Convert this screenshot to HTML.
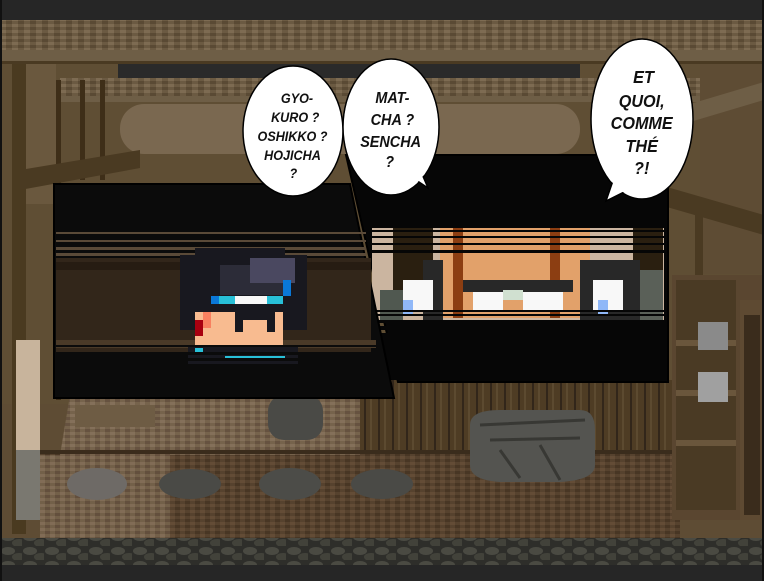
<!DOCTYPE html>
<html><head><meta charset="utf-8"><style>
html,body{margin:0;padding:0;background:#111;}
svg{display:block}
text{font-family:"Liberation Sans",sans-serif;font-weight:bold;font-style:italic;fill:#111;text-anchor:middle}
</style></head><body>
<svg width="764" height="581" viewBox="0 0 764 581" xmlns="http://www.w3.org/2000/svg">
<defs>
<pattern id="tex" width="12" height="6" patternUnits="userSpaceOnUse">
<rect width="12" height="6" fill="#6b5a42"/><rect x="0" y="0" width="6" height="3" fill="#7d6b52"/><rect x="6" y="3" width="6" height="3" fill="#5a4a34"/>
</pattern>
<pattern id="floor" width="10" height="6" patternUnits="userSpaceOnUse">
<rect width="10" height="6" fill="#56422e"/><rect x="0" y="0" width="5" height="3" fill="#634c36"/><rect x="5" y="3" width="5" height="3" fill="#483624"/>
</pattern>
<pattern id="mat" width="10" height="6" patternUnits="userSpaceOnUse">
<rect width="10" height="6" fill="#76634c"/><rect x="0" y="0" width="5" height="3" fill="#84705a"/><rect x="5" y="3" width="5" height="3" fill="#665240"/>
</pattern>
<pattern id="plank" width="14" height="10" patternUnits="userSpaceOnUse">
<rect width="14" height="10" fill="#4e3c24"/><rect x="0" width="2" height="10" fill="#32261a"/><rect x="6" width="2" height="10" fill="#5c4a30"/>
</pattern>
<pattern id="cob" width="22" height="14" patternUnits="userSpaceOnUse">
<rect width="22" height="14" fill="#2e2e2a"/><ellipse cx="8" cy="5" rx="7" ry="4" fill="#4a4a42"/><ellipse cx="19" cy="11" rx="7" ry="4" fill="#42423a"/>
</pattern>
</defs>
<rect width="764" height="581" fill="#5e4c34"/>
<rect x="0" y="0" width="764" height="20" fill="#262626"/>
<rect x="0" y="20" width="764" height="34" fill="url(#tex)"/>
<rect x="0" y="50" width="764" height="13" fill="#6e5e46"/>
<rect x="0" y="61" width="764" height="3" fill="#4a3a22"/>
<rect x="0" y="64" width="764" height="340" fill="#5f4e34"/>
<rect x="118" y="64" width="462" height="14" fill="#2a2a2a"/>
<rect x="60" y="78" width="640" height="22" fill="url(#tex)"/>
<rect x="60" y="96" width="640" height="6" fill="#6e5e46"/>
<rect x="120" y="104" width="460" height="50" rx="24" fill="#7a6850"/>
<rect x="12" y="64" width="14" height="470" fill="#4a3a20"/>
<rect x="26" y="64" width="30" height="140" fill="#6a583e"/>
<rect x="56" y="80" width="5" height="320" fill="#3e2e18"/>
<rect x="80" y="80" width="5" height="100" fill="#3e2e18"/>
<rect x="100" y="80" width="5" height="100" fill="#3e2e18"/>
<polygon points="20,170 140,150 140,168 20,190" fill="#4a3a22"/>
<rect x="16" y="340" width="24" height="180" fill="#c8b49c"/>
<rect x="16" y="450" width="24" height="70" fill="#7a7870"/>
<rect x="700" y="64" width="64" height="210" fill="#5e4c34"/>
<polygon points="670,110 764,82 764,100 670,128" fill="#6e5e46"/>
<polygon points="660,185 764,215 764,235 660,205" fill="#4a3a22"/>
<rect x="695" y="200" width="8" height="80" fill="#4a3a22"/>
<rect x="360" y="380" width="320" height="75" fill="url(#plank)"/>
<rect x="40" y="450" width="640" height="95" fill="url(#floor)"/>
<polygon points="70,395 360,395 360,455 60,455" fill="url(#mat)"/>
<rect x="40" y="455" width="130" height="90" fill="url(#mat)" opacity="0.9"/>
<rect x="75" y="405" width="80" height="22" fill="#6e5c44"/>
<rect x="40" y="450" width="640" height="4" fill="#3a2c1c"/>
<rect x="672" y="275" width="92" height="245" fill="#5a4630"/>
<rect x="676" y="280" width="60" height="230" fill="#4a3a24"/>
<rect x="740" y="300" width="24" height="220" fill="#5e4a32"/>
<rect x="744" y="315" width="16" height="200" fill="#3a2c1c"/>
<rect x="676" y="340" width="60" height="6" fill="#6a563c"/>
<rect x="676" y="390" width="60" height="6" fill="#6a563c"/>
<rect x="676" y="440" width="60" height="6" fill="#6a563c"/>
<rect x="698" y="322" width="30" height="28" fill="#8a8a8a"/>
<rect x="698" y="372" width="30" height="30" fill="#a0a0a0"/>
<ellipse cx="97" cy="484" rx="30" ry="16" fill="#6e6a66"/>
<ellipse cx="190" cy="484" rx="31" ry="15" fill="#4a4a46"/>
<ellipse cx="290" cy="484" rx="31" ry="16" fill="#4c4c48"/>
<ellipse cx="382" cy="484" rx="31" ry="15" fill="#4a4a46"/>
<rect x="268" y="395" width="55" height="45" rx="16" fill="#4a4a46"/>
<path d="M470 425 Q470 410 500 410 L580 410 Q595 410 595 430 L595 465 Q595 480 560 482 L500 482 Q470 480 470 465 Z" fill="#545450"/>
<path d="M480 425 L585 420 M490 440 L580 438 M500 450 L520 478 M540 445 L560 480" stroke="#383834" stroke-width="3" fill="none"/>
<rect x="0" y="538" width="764" height="28" fill="url(#cob)"/>
<rect x="0" y="565" width="764" height="16" fill="#262626"/>
<rect x="0" y="0" width="2" height="581" fill="#111"/>
<rect x="762" y="0" width="2" height="581" fill="#111"/>

<polygon points="346,155 668,155 668,382 398,382" fill="#060606" stroke="#000" stroke-width="2"/>
<g>
<rect x="372" y="228" width="292" height="92" fill="#cbb5a0"/>
<rect x="393" y="228" width="40" height="70" fill="#2a1f10"/>
<rect x="633" y="228" width="30" height="70" fill="#2a1f10"/>
<rect x="440" y="228" width="150" height="90" fill="#e2a16a"/>
<rect x="453" y="228" width="10" height="90" fill="#8c3e12"/>
<rect x="550" y="228" width="10" height="90" fill="#8c3e12"/>
<rect x="423" y="260" width="20" height="60" fill="#282828"/>
<rect x="580" y="260" width="60" height="60" fill="#282828"/>
<rect x="403" y="280" width="30" height="30" fill="#f8f8f8"/>
<rect x="403" y="300" width="10" height="15" fill="#90b8f8"/>
<rect x="593" y="280" width="30" height="30" fill="#f8f8f8"/>
<rect x="598" y="300" width="10" height="15" fill="#90b8f8"/>
<rect x="463" y="280" width="110" height="12" fill="#282828"/>
<rect x="473" y="292" width="30" height="18" fill="#f8f8f8"/>
<rect x="523" y="292" width="40" height="18" fill="#f8f8f8"/>
<rect x="503" y="290" width="20" height="10" fill="#d0e0d0"/>
<rect x="640" y="270" width="23" height="50" fill="#5a6058"/>
<rect x="380" y="290" width="23" height="30" fill="#505850"/>
<g fill="#060606">
<rect x="372" y="230" width="292" height="2"/><rect x="372" y="236" width="292" height="2"/><rect x="372" y="243" width="292" height="2"/><rect x="372" y="250" width="292" height="3"/>
<rect x="372" y="310" width="292" height="2"/><rect x="372" y="314" width="292" height="2"/><rect x="372" y="320" width="292" height="3"/><rect x="372" y="326" width="292" height="4"/><rect x="372" y="333" width="292" height="5"/>
</g>
<rect x="372" y="338" width="292" height="42" fill="#060606"/>
</g>

<polygon points="54,184 350,184 394,398 54,398" fill="#0b0b0b" stroke="#000" stroke-width="2"/>
<g>
<rect x="56" y="232" width="310" height="2" fill="#5a4a38"/>
<rect x="56" y="240" width="310" height="2" fill="#5a4a38"/>
<rect x="56" y="247" width="310" height="3" fill="#5a4a38"/>
<rect x="56" y="253" width="310" height="3" fill="#5a4a38"/>
<rect x="56" y="258" width="315" height="95" fill="#32261a"/>
<rect x="56" y="262" width="315" height="8" fill="#261c12"/>
<rect x="56" y="340" width="320" height="8" fill="#4a3a28"/>
<rect x="180" y="255" width="127" height="75" fill="#18181f"/>
<rect x="195" y="248" width="90" height="10" fill="#18181f"/>
<rect x="220" y="265" width="70" height="30" fill="#2c2c38"/>
<rect x="250" y="258" width="45" height="25" fill="#4a4860"/>
<rect x="283" y="280" width="8" height="16" fill="#0a78d8"/>
<rect x="211" y="296" width="8" height="8" fill="#0a78d8"/>
<rect x="219" y="296" width="16" height="8" fill="#28c0d8"/>
<rect x="235" y="296" width="32" height="8" fill="#f8f8f8"/>
<rect x="267" y="296" width="16" height="8" fill="#28c0d8"/>
<rect x="195" y="312" width="88" height="34" fill="#f8bb90"/>
<rect x="203" y="312" width="8" height="16" fill="#f88060"/>
<rect x="195" y="320" width="8" height="16" fill="#a80010"/>
<rect x="235" y="304" width="8" height="28" fill="#18181f"/>
<rect x="267" y="304" width="8" height="28" fill="#18181f"/>
<rect x="243" y="312" width="24" height="8" fill="#18181f"/>
<rect x="188" y="346" width="110" height="20" fill="#18181f"/>
<rect x="195" y="348" width="8" height="4" fill="#28c0d8"/>
<rect x="225" y="356" width="60" height="3" fill="#28c0d8"/>
<g fill="#0b0b0b">
<rect x="56" y="345" width="320" height="2"/><rect x="56" y="352" width="320" height="3"/><rect x="56" y="358" width="320" height="3"/><rect x="56" y="364" width="320" height="3"/>
</g>
<rect x="56" y="369" width="330" height="28" fill="#0b0b0b"/>
</g>

<!-- bubbles -->
<g stroke="#000" stroke-width="1.5" fill="#fff">
<ellipse cx="293" cy="131" rx="50" ry="65"/>
<ellipse cx="391" cy="127" rx="48" ry="68"/>
<path d="M398 168 L428 188 L416 160 Z"/>
<ellipse cx="642" cy="119" rx="51" ry="80"/>
<path d="M616 172 L606 201 L636 186 Z"/>
</g>
<g fill="#fff">
<ellipse cx="391" cy="127" rx="47" ry="67"/>
<ellipse cx="642" cy="119" rx="50" ry="79"/>
</g>
<g font-size="14" transform="scale(0.9,1)">
<text><tspan x="330" y="103">GYO-</tspan><tspan x="328" y="122">KURO ?</tspan><tspan x="325" y="141">OSHIKKO ?</tspan><tspan x="325" y="160">HOJICHA</tspan><tspan x="326" y="178">?</tspan></text>
</g>
<g transform="scale(0.9,1)">
<text font-size="16"><tspan x="436" y="103">MAT-</tspan><tspan x="436" y="125">CHA ?</tspan><tspan x="434" y="147">SENCHA</tspan><tspan x="433" y="167">?</tspan></text>
<text font-size="18"><tspan x="715" y="83">ET</tspan><tspan x="713" y="107">QUOI,</tspan><tspan x="713" y="129">COMME</tspan><tspan x="713" y="152">THÉ</tspan><tspan x="713" y="174">?!</tspan></text>
</g>
</svg>
</body></html>
